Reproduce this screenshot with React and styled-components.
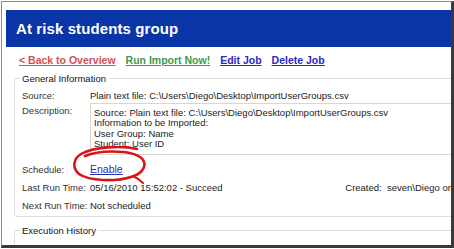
import React from "react";
import styled, { createGlobalStyle } from "styled-components";

const Global = createGlobalStyle`
  html, body { margin: 0; padding: 0; background: #fff; }
  body { font-family: "Liberation Sans", Arial, sans-serif; }
`;

const Frame = styled.div`
  box-sizing: border-box;
  width: 453px;
  height: 247px;
  margin: 1px 0 0 1px;
  border: 1px solid #8a8a8a;
  border-right: 3px solid #3a3a3a;
  border-bottom: 3px solid #3a3a3a;
  overflow: hidden;
  background: #fff;
  padding: 8px 0 0 4px;
`;

const Header = styled.div`
  height: 37px;
  background: #0a35a6;
  display: flex;
  align-items: center;
  padding-left: 10px;
`;

const Title = styled.h1`
  margin: 0;
  color: #fff;
  font-size: 15px;
  font-weight: bold;
  letter-spacing: 0.1px;
`;

const LinkBar = styled.div`
  display: flex;
  gap: 10px;
  padding: 7px 0 0 13px;
  height: 14px;
`;

const Action = styled.a`
  color: ${(p) => p.color};
  font-size: 10.5px;
  font-weight: bold;
  text-decoration: underline;
  cursor: pointer;
`;

const Group = styled.fieldset`
  margin: ${(p) => p.top}px -60px 0 8px;
  padding: 0 0 ${(p) => p.bottom}px 7px;
  border: 1px solid #dcdcdc;
  border-radius: 3px;
  font-size: 9.5px;
  color: #222;
`;

const Legend = styled.legend`
  padding: 0 2px;
  font-size: 9.5px;
  color: #111;
  margin-left: -2px;
`;

const Row = styled.div`
  display: flex;
  align-items: flex-start;
  margin-top: ${(p) => p.space}px;
  line-height: 11px;
`;

const Label = styled.div`
  flex: 0 0 68px;
  color: #333;
  margin-top: ${(p) => p.shift || 0}px;
`;

const Value = styled.div`
  flex: 1;
  display: flex;
  justify-content: space-between;
  position: relative;
`;

const DescBox = styled.div`
  flex: 1;
  border: 1px solid #d6d6d6;
  padding: 4px 6px 5px 3px;
  line-height: 10.3px;
`;

const EnableLink = styled.a`
  color: #2b2bb8;
  text-decoration: underline;
  font-size: 10.5px;
  cursor: pointer;
`;

const Circle = styled.svg`
  position: absolute;
  left: -19px;
  top: -18px;
  pointer-events: none;
`;

const Created = styled.span`
  margin-right: 57px;
  white-space: nowrap;
`;

export default function App() {
  return (
    <>
      <Global />
      <Frame>
        <Header>
          <Title>At risk students group</Title>
        </Header>
        <LinkBar>
          <Action color="#d2504f">&lt; Back to Overview</Action>
          <Action color="#3d9a4c">Run Import Now!</Action>
          <Action color="#2a2ac4">Edit Job</Action>
          <Action color="#2a2ac4">Delete Job</Action>
        </LinkBar>
        <Group top={5} bottom={5}>
          <Legend>General Information</Legend>
          <Row space={6}>
            <Label>Source:</Label>
            <Value>Plain text file: C:\Users\Diego\Desktop\ImportUserGroups.csv</Value>
          </Row>
          <Row space={2}>
            <Label shift={2}>Description:</Label>
            <DescBox>
              Source: Plain text file: C:\Users\Diego\Desktop\ImportUserGroups.csv
              <br />
              Information to be Imported:
              <br />
              User Group: Name
              <br />
              Student: User ID
            </DescBox>
          </Row>
          <Row space={9}>
            <Label>Schedule:</Label>
            <Value>
              <span>
                <EnableLink>Enable</EnableLink>
              </span>
              <Circle width="78" height="38" viewBox="0 0 78 38">
                <path
                  d="M66 3 C50 -1 22 1 10 8 C2 13 1 22 8 28 C18 35 44 36 60 31 C70 28 75 22 73 16 C71 10 62 7 52 6 C40 5 24 6 14 10"
                  fill="none"
                  stroke="#d4161b"
                  strokeWidth="2.6"
                  strokeLinecap="round"
                />
                <path
                  d="M62 30 C66 32 69 34 72 37"
                  fill="none"
                  stroke="#d4161b"
                  strokeWidth="2"
                  strokeLinecap="round"
                />
              </Circle>
            </Value>
          </Row>
          <Row space={7}>
            <Label>Last Run Time:</Label>
            <Value>
              <span>05/16/2010 15:52:02 - Succeed</span>
              <Created>Created:&nbsp;&nbsp;seven\Diego on</Created>
            </Value>
          </Row>
          <Row space={7}>
            <Label>Next Run Time:</Label>
            <Value>Not scheduled</Value>
          </Row>
        </Group>
        <Group top={8} bottom={20}>
          <Legend>Execution History</Legend>
        </Group>
      </Frame>
    </>
  );
}
